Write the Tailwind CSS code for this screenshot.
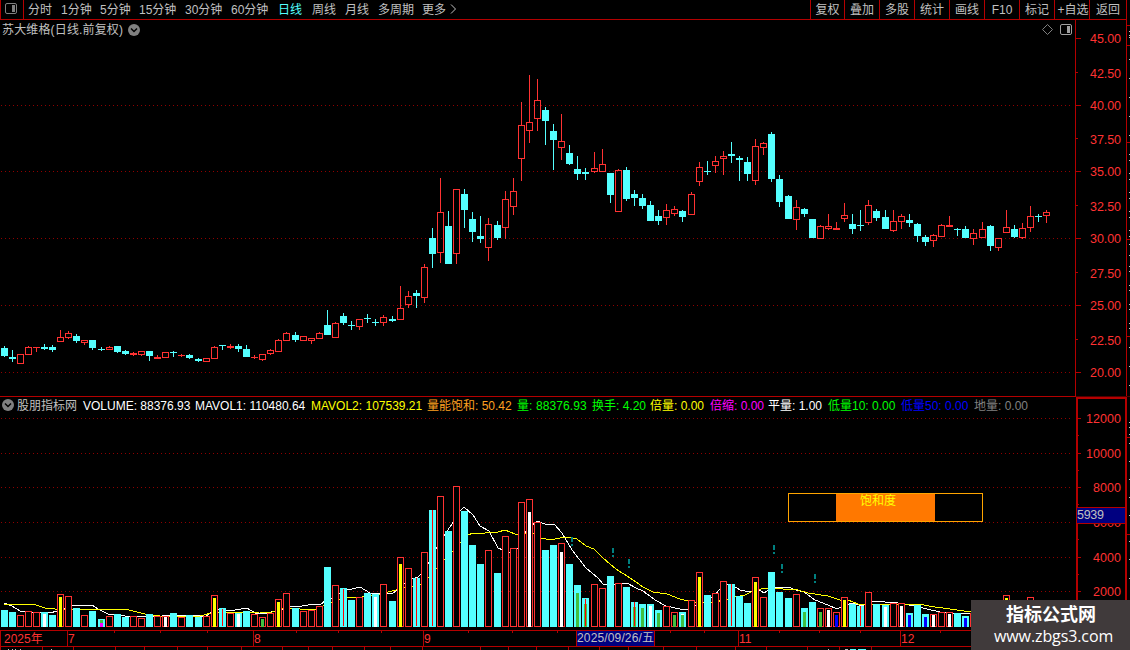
<!DOCTYPE html>
<html lang="zh-CN">
<head>
    <meta charset="UTF-8">
    <meta name="viewport" content="width=device-width, initial-scale=1.0">
    <title>苏大维格 日线</title>
    <script src="https://cdn.jsdelivr.net/npm/@tailwindcss/browser@4"></script>
</head>
<body class="bg-black">
<div class="relative w-[1130px] h-[650px] overflow-hidden bg-black text-[#c0c0c0] text-[12px] leading-[18px] font-['Liberation_Sans','Noto_Sans_CJK_SC',sans-serif] flex flex-col whitespace-nowrap">

    <!-- toolbar -->
    <header class="flex h-[20px] w-[1127px] border-b border-r border-[#b40000]">
        <div class="w-[24px] border-x border-[#b40000] pl-[4px] pt-[3px]">
            <svg width="12" height="11" viewBox="0 0 12 11"><rect x=".5" y=".5" width="11" height="10" rx="1.5" fill="none" stroke="#808080"/><rect x="7" y="2" width="3" height="7" fill="#808080"/></svg>
        </div>
        <nav class="flex w-[786px] pl-[4px] leading-[20px]">
            <span class="w-[33px]">分时</span>
            <span class="w-[39px]">1分钟</span>
            <span class="w-[39px]">5分钟</span>
            <span class="w-[46px]">15分钟</span>
            <span class="w-[46px]">30分钟</span>
            <span class="w-[47px]">60分钟</span>
            <span class="w-[34px] text-[#54ffff]">日线</span>
            <span class="w-[33px]">周线</span>
            <span class="w-[33px]">月线</span>
            <span class="w-[44px]">多周期</span>
            <span class="w-[28px]">更多</span>
            <svg class="mt-[4px]" width="7" height="10" viewBox="0 0 7 10"><path d="M1 .5L5.5 5L1 9.5" fill="none" stroke="#c0c0c0"/></svg>
        </nav>
        <div class="flex text-center leading-[20px]">
            <span class="w-[34px] border-l border-[#b40000]">复权</span>
            <span class="w-[35px] border-l border-[#b40000]">叠加</span>
            <span class="w-[35px] border-l border-[#b40000]">多股</span>
            <span class="w-[35px] border-l border-[#b40000]">统计</span>
            <span class="w-[35px] border-l border-[#b40000]">画线</span>
            <span class="w-[35px] border-l border-[#b40000]">F10</span>
            <span class="w-[35px] border-l border-[#b40000]">标记</span>
            <span class="w-[35px] border-l border-[#b40000] pl-[2px]">+自选</span>
            <span class="w-[37px] border-l border-[#b40000]">返回</span>
        </div>
    </header>

    <!-- price panel -->
    <section class="flex h-[376px]">
        <div class="w-[1075px] flex flex-col">
            <div class="flex h-[19px] mb-px items-center pl-[2px]">
                <span class="w-[126px] tracking-[0.15px]">苏大维格(日线.前复权)</span>
                <svg width="12" height="12" viewBox="0 0 12 12"><circle cx="6" cy="6" r="6" fill="#808080"/><path d="M3 4.5L6 7.5L9 4.5" fill="none" stroke="#000" stroke-width="1.5"/></svg>
                <svg class="ml-auto mr-[7px]" width="11" height="11" viewBox="0 0 11 11"><path d="M5.5 .5L10.5 5.5L5.5 10.5L.5 5.5Z" fill="none" stroke="#808080"/></svg>
                <svg class="mr-[3px]" width="12" height="11" viewBox="0 0 12 11"><rect x=".5" y=".5" width="11" height="10" rx="1.5" fill="none" stroke="#a0a0a0"/><rect x="7" y="2" width="3" height="7" fill="#a0a0a0"/></svg>
            </div>
            <svg id="price" width="1075" height="356" viewBox="0 40 1075 356"></svg>
        </div>
        <svg id="priceAxis" width="55" height="376" viewBox="1075 20 55 376"></svg>
    </section>

    <!-- volume panel -->
    <section class="flex h-[234px]">
        <div class="w-[1076px] flex flex-col border-t border-[#b40000]">
            <div class="flex h-[18px] items-center pl-[2px]">
                <svg class="-mt-[2px]" width="12" height="12" viewBox="0 0 12 12"><circle cx="6" cy="6" r="6" fill="#808080"/><path d="M3 4.5L6 7.5L9 4.5" fill="none" stroke="#000" stroke-width="1.5"/></svg>
                <span class="w-[65px] pl-[3px]">股朋指标网</span>
                <span class="w-[4px]"></span>
                <span class="w-[112px] text-white">VOLUME: 88376.93</span>
                <span class="w-[116px] text-white">MAVOL1: 110480.64</span>
                <span class="w-[116px] text-[#ffff00]">MAVOL2: 107539.21</span>
                <span class="w-[90px] text-[#ffa020]">量能饱和: 50.42</span>
                <span class="w-[75px] text-[#00ff00] tracking-[0.1px]">量: 88376.93</span>
                <span class="w-[58px] text-[#00ff00]">换手: 4.20</span>
                <span class="w-[60px] text-[#ffff00]">倍量: 0.00</span>
                <span class="w-[58px] text-[#ff00ff]">倍缩: 0.00</span>
                <span class="w-[60px] text-white">平量: 1.00</span>
                <span class="w-[73px] text-[#00ff00]">低量10: 0.00</span>
                <span class="w-[73px] text-[#0000ff]">低量50: 0.00</span>
                <span class="text-[#808080]">地量: 0.00</span>
            </div>
            <svg id="volume" width="1076" height="215" viewBox="0 415 1076 215"></svg>
        </div>
        <svg id="volumeAxis" width="54" height="234" viewBox="1076 396 54 234"></svg>
    </section>

    <!-- date axis -->
    <svg id="dates" class="shrink-0" width="1130" height="20" viewBox="0 630 1130 20"></svg>

    <!-- site badge -->
    <div class="absolute left-[971px] top-[600px] w-[159px] h-[50px] bg-[#403a3b] text-white">
        <div class="pl-[35px] pt-[4px] text-[18px] leading-[22px] font-bold">指标公式网</div>
        <div class="pl-[23px] text-[16px] leading-[20px] tracking-[-0.1px] font-['Open_Sans','Noto_Sans',sans-serif]">www.zbgs3.com</div>
    </div>
</div>

<script>
    const RED = '#ff3232', CYAN = '#54ffff', LINE = '#b40000';

    // left edge of every bar
    const xs = [];
    const runs = [[1, 12], [98, 12], [195, 12], [292, 12], [389, 13], [494, 12], [591, 12], [688, 12], [785, 12], [882, 12], [979, 9]];
    runs.forEach(([start, n]) => { for (let i = 0; i < n; i++) xs.push(start + i * 8); });

    // direction, high, body top, body bottom, low
    const candles = `d346,348,356,357 d350,357,359,362 u354,354,364,364 u346,347,355,355 u347,347,348,352 d344,347,349,350 d345,347,350,352 u330,337,342,342 u331,333,338,339 d334,336,341,343
u340,340,343,345 d340,340,348,350 d347,349,350,351 u346,347,350,350 d346,346,352,353 d350,351,354,355 u352,353,355,356 u351,351,355,356 d351,351,356,361 u355,357,359,359
u352,352,358,358 d351,352,353,357 u354,355,356,357 d354,355,358,359 d358,359,361,362 u358,358,362,362 u346,347,359,359 d345,345,346,350 u344,346,348,349 d344,346,349,352
d345,349,357,357 u355,357,358,359 u354,354,360,361 u349,350,354,355 u339,340,352,352 u332,333,341,341 d332,335,340,342 u336,336,341,341 u338,338,341,344 u332,333,339,339
d310,325,335,335 u322,323,338,338 d313,316,323,325 d321,325,326,330 u319,319,327,330 d314,318,319,323 d319,322,323,326 u315,317,323,326 d316,319,321,322 u286,308,320,320
u291,296,305,308 d290,293,296,308 u264,267,298,303 d228,238,254,268 u178,212,253,263 d211,226,264,264 u189,189,254,264 d189,194,210,228 d212,219,232,242 d216,236,239,243
u218,224,248,261 d221,225,238,240 u191,199,228,239 u178,191,207,215 u102,125,159,181 u75,122,131,143 u79,100,119,131 d107,110,121,145 d124,131,140,170 u114,141,148,160
d145,153,164,165 d156,169,174,180 d168,172,174,180 u152,168,172,173 u149,164,172,172 d173,173,195,203 u169,170,212,212 d167,170,199,201 d190,194,198,206 d194,198,206,209
d201,205,221,221 d210,216,221,225 u204,210,218,225 u206,209,214,216 d210,211,217,222 u192,194,215,215 u162,167,182,186 d161,171,172,175 u156,161,166,173 u151,156,159,175
d142,154,156,163 d156,158,160,181 d157,162,174,181 u139,146,181,185 u142,143,148,155 d132,134,179,182 d175,179,202,207 d195,196,219,219 u200,207,220,230 d208,209,214,217
d219,219,238,238 u225,226,239,239 u214,226,229,230 u222,228,230,230 u203,215,219,222 d214,224,229,234 d210,225,226,231 u200,205,223,225 d209,211,218,221 d210,217,229,229
u210,221,231,232 u214,216,222,229 d214,220,223,227 d223,224,236,242 d235,237,242,246 u234,235,241,247 u224,225,237,237 u216,225,227,227 d228,229,230,236 d226,229,238,238
u229,233,239,245 u222,229,238,238 d225,226,246,251 u238,238,248,251 u210,227,233,233 d225,229,237,238 u223,228,238,239 u206,216,228,232 d214,216,217,222 u210,212,216,223`.split(/\s+/);

    // bar top, optional inner mark: w/y/g/b/m + its top, r = red line
    const volumes = `610 612 615 611 612 612,w614 615 594,y597 596 608 615 611 619,g620,m623 616 614 617 616 618 614 616 616,w617 613 617 615 617 616 595,y598 608,r609 613 613,w614
611 614 617,g619 613 599,y602 593 608 611 610 606 567 585 588,r589 600 597 593 594,w597 584 601 557,y564 568 578,r578 552 510,r510 496 531 486 511 545 564 550 573 536 548 502 499,w512 522 550 545 543,w552
564 585,g593 598,g604,r599 584 588 576 583 587 602,g607,r602 604,g608 604,w606 610,g613 606 612,g615 612,w614,g615 600 572,y577 595 593 581 584,r584 596 603 577,y582 597 572 592 598 594
608,g612 602 608,g612 608,w610 612,b615 597,y600 604 606,r606 592 604 605,w607 603 603,w606 613,b615 605 614,b617 614,w615 612 612,w614 613 616,b618 613 611 615 612 595,y598 612 610 597 606 607`.split(/\s+/);
    const marks = { w: '#ffffff', y: '#ffff00', g: '#40c040', b: '#0000ff', m: '#ff00ff', r: '#ff0000' };

    const ma1 = '4,603 12,606 20,611 28,612 50,613 57,611 70,606 92,605 98,609 108,614 116,614 125,616 162,616 172,615 186,615 200,616 206,616 212,612 219,609 225,611 235,610 247,608 255,613 268,613 275,611 283,609 292,606 302,606 314,604 320,605 326,600 333,598 345,590 352,589 360,587 370,593 392,594 400,588 408,580 418,577 421,574 429,562 437,547 445,534 452,524 459,512 464,507 473,515 480,526 489,531 498,548 510,553 518,548 526,531 537,521 545,524 554,524 562,533 572,550 586,568 598,578 603,584 616,585 627,583 636,588 643,591 655,600 666,606 680,609 688,609 696,605 704,602 713,597 720,589 728,584 732,585 740,590 750,592 758,589 764,593 772,588 788,587 796,590 804,592 815,600 828,605 837,609 844,606 852,603 862,606 872,601 898,603 914,606 940,612 962,614 971,613';
    const ma2 = '4,605 12,604 33,604 45,608 55,609 100,609 129,610 145,614 160,616 200,616 215,612 225,613 260,612 272,612 280,609 290,608 300,609 315,610 325,605 333,602 348,597 362,597 380,594 392,591 408,587 420,585 429,577 437,568 444,560 452,552 461,542 468,535 473,533 480,534 490,532 498,532 505,530 515,534 525,534 535,533 541,538 546,539 555,539 565,537 577,539 586,546 594,549 602,557 611,565 619,571 627,576 636,582 643,587 653,592 667,594 680,599 688,601 696,603 715,602 724,600 735,597 745,595 755,590 768,588 783,589 798,590 808,593 828,596 840,600 848,600 858,604 865,605 880,604 918,604 935,607 950,609 971,612';

    const rect = (x, y, w, h, fill) => `<rect x="${x}" y="${y}" width="${w}" height="${h}" fill="${fill}"/>`;
    const text = (x, y, s, fill, anchor = 'start') => `<text x="${x}" y="${y}" fill="${fill}" text-anchor="${anchor}" font-size="12">${s}</text>`;
    const figure = (y, s, w) => `<text x="${1121 - w}" y="${y}" fill="${RED}" font-size="12.5" textLength="${w}">${s}</text>`;
    const box = (x, y, w, h, fill) => `<rect x="${x + .5}" y="${y + .5}" width="${w - 1}" height="${h - 1}" fill="${fill}" stroke="${RED}" shape-rendering="crispEdges"/>`;
    const dots = (y) => `<path d="M1 ${y + .5}H1073" stroke="${LINE}" stroke-dasharray="1 3" shape-rendering="crispEdges" opacity=".8"/>`;

    // price
    let out = [105, 171, 238, 305, 372].map(dots).join('');
    candles.forEach((c, i) => {
        const x = xs[i];
        const [hi, top, bot, lo] = c.slice(1).split(',').map(Number);
        const color = c[0] === 'u' ? RED : CYAN;
        out += rect(x + 3, hi, 1, top - hi, color) + rect(x + 3, bot, 1, lo - bot, color);
        out += c[0] === 'u' && bot - top > 2 ? box(x, top, 7, bot - top, 'none') : rect(x, top, 7, bot - top, color);
    });
    document.getElementById('price').innerHTML = out;

    // price axis
    out = rect(1075, 20, 1, 376, LINE) + rect(1126, 20, 1, 376, LINE);
    [38, 72, 105, 138, 171, 205, 238, 272, 305, 339, 372].forEach((y, i) => {
        out += rect(1076, y, i % 2 ? 2 : 5, 1, LINE);
        out += figure(y + (i % 2 ? 6 : 5), (45 - i * 2.5).toFixed(2), 31);
    });
    [25, 45, 142, 239, 336].forEach(y => out += rect(1127, y, 3, 1, LINE));
    [31, 35, 37, 59, 78, 97, 116, 135, 154, 160, 173, 179, 192, 198, 211, 217, 230, 236, 244, 255, 266, 271, 285, 290, 304, 309, 323, 328, 347, 366, 385].forEach(y => out += rect(1129, y, 1, 1, '#c0c0c0'));
    document.getElementById('priceAxis').innerHTML = out;

    // volume
    out = [418, 453, 487, 522, 557, 591].map(dots).join('');
    out += `<polyline points="${ma1}" fill="none" stroke="#fff" shape-rendering="crispEdges"/>`;
    out += `<polyline points="${ma2}" fill="none" stroke="#ff0" shape-rendering="crispEdges"/>`;
    volumes.forEach((v, i) => {
        const x = xs[i];
        const [top, ...inner] = v.split(',');
        const up = candles[i][0] === 'u';
        out += up ? box(x, +top, 7, 627 - top, '#000') : rect(x, top, 7, 627 - top, CYAN);
        inner.forEach(m => {
            const y = +m.slice(1);
            out += m[0] === 'r' ? rect(x + 3, y, 1, 626 - y, marks.r) : rect(x + 2, y, 3, 627 - y, marks[m[0]]);
        });
    });
    [[571, 537], [612, 548], [628, 559], [773, 545], [781, 564], [814, 574]].forEach(([x, y]) => {
        out += rect(x, y, 2, 5, '#008080') + rect(x, y + 7, 2, 2, '#008080');
    });
    out += `<rect x="788.5" y="493.5" width="194" height="28" fill="#000" stroke="#ffa500"/>`;
    out += rect(836, 494, 99, 27, '#ff7800') + text(860, 505, '饱和度', '#ffff00');
    document.getElementById('volume').innerHTML = out;

    // volume axis
    out = rect(1076, 397, 2, 233, LINE) + rect(1076, 397, 51, 2, LINE) + rect(1125, 397, 2, 233, LINE) + rect(1076, 396, 54, 1, '#500000');
    [418, 453, 487, 522, 557, 591].forEach((y, i) => {
        const label = String(12000 - i * 2000);
        out += rect(1078, y, 3, 1, LINE) + rect(1078, y + 17, 1, 1, LINE);
        out += figure(y + 5, label, label.length * 7);
    });
    out += rect(1076, 507, 50, 17, LINE) + rect(1077, 508, 48, 15, '#000080');
    out += `<text x="1077" y="519" fill="#c0c0c0" font-size="12.5" textLength="27">5939</text>`;
    [437, 534, 631].forEach(y => out += rect(1127, y, 3, 1, LINE));
    [422, 427, 434, 443, 461, 479, 497, 515, 541, 559, 578].forEach(y => out += rect(1129, y, 1, 1, '#c0c0c0'));
    document.getElementById('volumeAxis').innerHTML = out;

    // dates
    out = rect(0, 630, 1130, 1, LINE) + rect(0, 646, 1130, 1, LINE) + rect(0, 630, 1, 20, LINE);
    [67, 253, 423, 576, 738, 900].forEach(x => out += rect(x, 631, 1, 15, LINE));
    [114, 160, 207, 296, 338, 381, 468, 512, 557, 670, 704, 779, 819, 860, 940].forEach(x => out += rect(x, 631, 1, 2, LINE));
    [42, 73, 115, 144, 177, 207, 241, 282, 308, 332, 364, 390, 422, 480, 508, 536, 568, 599, 628, 663, 696, 735, 766, 807, 839, 871].forEach(x => out += rect(x, 647, 1, 3, LINE));
    out += text(4, 643, '2025年', RED) + text(68, 643, '7', RED) + text(254, 643, '8', RED) + text(424, 643, '9', RED) + text(739, 643, '11', RED) + text(901, 643, '12', RED);
    out += rect(577, 631, 77, 15, '#000080') + rect(654, 631, 1, 15, LINE);
    out += `<text x="577" y="642" fill="#c0c0c0" font-size="12" textLength="77">2025/09/26/五</text>`;
    [8, 12, 15, 20, 51, 828].forEach(x => out += rect(x, 649, 1, 1, '#c0c0c0'));
    out += rect(845, 649, 3, 1, '#c0c0c0') + rect(850, 649, 6, 1, CYAN) + rect(858, 649, 8, 1, CYAN);
    document.getElementById('dates').innerHTML = out;
</script>
</body>
</html>
